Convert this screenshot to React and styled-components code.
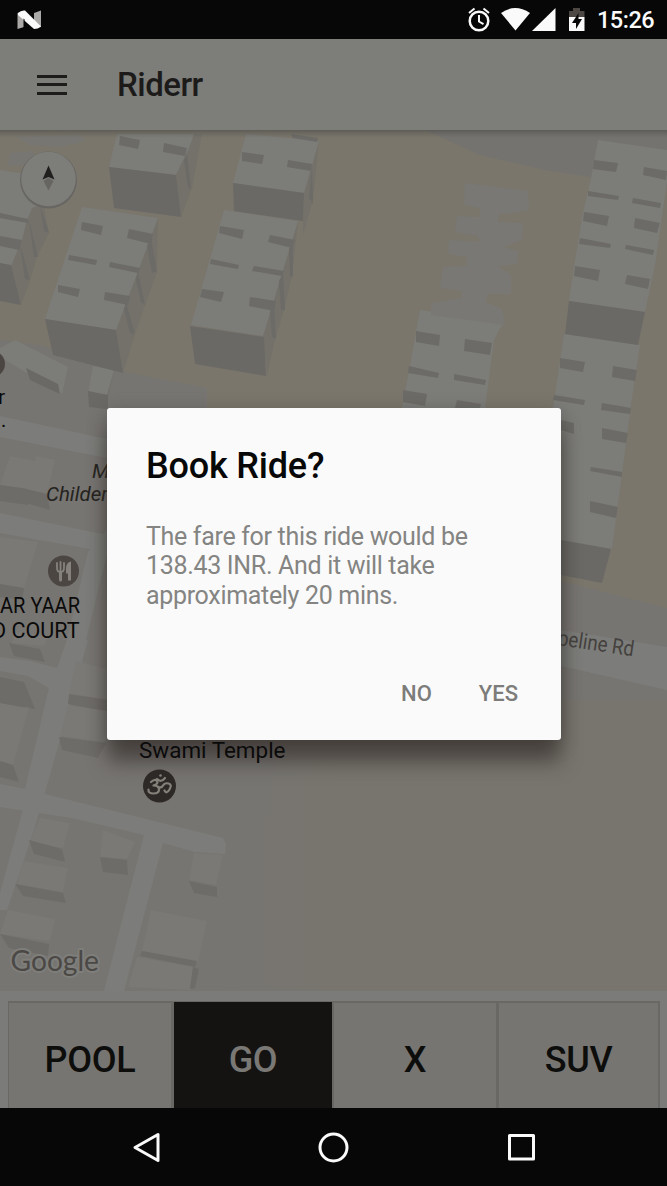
import React from 'react';
import styled, { createGlobalStyle } from 'styled-components';

const GlobalStyle = createGlobalStyle`
  *, *::before, *::after { box-sizing: border-box; }
  body { margin: 0; background: #070707; font-family: Roboto, "Liberation Sans", sans-serif; }
  button { font: inherit; border: 0; background: none; padding: 0; }
`;

const Screen = styled.main`
  position: relative;
  width: 667px;
  height: 1186px;
  overflow: hidden;
  display: flex;
  flex-direction: column;
  background: #070707;
`;

const StatusBar = styled.div`
  height: 39px;
  flex: none;
  display: flex;
  align-items: center;
  justify-content: space-between;
  padding: 0 13px 0 17px;
  color: #fafafa;
`;

const StatusIcons = styled.div`
  display: flex;
  align-items: center;
`;

const Clock = styled.span`
  margin-left: 11px;
  width: 57px;
  font-size: 23.5px;
  font-weight: 500;
  line-height: 39px;
  letter-spacing: -0.5px;
  white-space: nowrap;
  padding-top: 2px;
`;

const Toolbar = styled.header`
  height: 91px;
  flex: none;
  display: flex;
  align-items: center;
  gap: 50px;
  padding-left: 37px;
  background: #7d7d7a;
`;

const MenuButton = styled.button`
  width: 30px;
  height: 20px;
  display: flex;
  flex-direction: column;
  justify-content: space-between;
`;

const MenuLine = styled.span`
  display: block;
  height: 3px;
  width: 30px;
  background: #1d1c1b;
`;

const AppTitle = styled.h1`
  margin: 0;
  font-size: 33px;
  font-weight: 500;
  letter-spacing: -0.5px;
  line-height: 40px;
  color: #1c1b1a;
`;

const MapArea = styled.section`
  height: 861px;
  flex: none;
  background: #7a766b;

  svg { display: block; }
`;

const RideBar = styled.nav`
  height: 117px;
  flex: none;
  display: grid;
  grid-template-columns: 165px 160px 165px 162px;
  padding: 10px 8px 0;
  background: #7b7c79;
`;

const RideOption = styled.button`
  border: solid #696865;
  border-width: ${(p) => (p.$active ? '1px 1px 0 1px' : '2px 2px 0 1px')};
  background: ${(p) => (p.$active ? '#141312' : '#767572')};
  color: ${(p) => (p.$active ? '#797875' : '#0d0d0c')};
  font-size: 36px;
  font-weight: 500;
  letter-spacing: -0.3px;
  padding-top: ${(p) => (p.$active ? '9px' : '8px')};
`;

const NavBar = styled.footer`
  height: 78px;
  flex: none;
  display: flex;
  align-items: center;
  justify-content: center;
  background: #070707;

  svg { display: block; }
`;

const Scrim = styled.div`
  position: absolute;
  inset: 39px 0 78px;
  display: flex;
  align-items: center;
  justify-content: center;
`;

const Dialog = styled.section`
  width: 454px;
  height: 332px;
  margin: 1px 0 0 1px;
  display: flex;
  flex-direction: column;
  padding: 36px 33px 24px 39px;
  border-radius: 3px;
  background: #fafafa;
  box-shadow: 0 23px 20px -1px rgba(48, 42, 39, 0.6), 0 4px 18px rgba(55, 52, 46, 0.4);
`;

const DialogTitle = styled.h2`
  margin: 0;
  font-size: 36px;
  font-weight: 500;
  line-height: 44px;
  letter-spacing: -0.2px;
  color: #080808;
`;

const DialogText = styled.p`
  margin: 34px 0 0;
  width: 360px;
  font-size: 25px;
  line-height: 29.3px;
  letter-spacing: -0.32px;
  color: #848482;
`;

const Actions = styled.div`
  margin-top: auto;
  display: flex;
  justify-content: flex-end;
  gap: 29px;
`;

const Action = styled.button`
  height: 46px;
  padding: 0 10px 0 8px;
  font-size: 22px;
  font-weight: 500;
  letter-spacing: 0;
  color: #7c7c7a;
`;

const roofs = [
  '0,170 38,176 42,204 32,208 27,220 22,240 11,266 0,263',
  '117,134 194,134 189,148 176,175 109,167',
  '246,134 319,141 304,193 233,183',
  '82,207 158,218 116,330 45,319',
  '224,210 298,221 263,336 191,325',
  '598,140 667,150 667,182 655,265 645,312 569,301 574,267 583,213 591,178',
  '564,334 640,345 631,405 612,549 561,540 553,408',
  '420,310 470,317 505,322 499,330 494,340 485,408 402,408 411,360',
  '0,348 15,340 68,367 62,394 27,373 0,357',
  '93,366 114,370 107,395 88,393',
];

const faint = [
  '465,183 528,191 529,211 499,214 498,222 523,223 522,240 503,247 518,251 517,264 498,266 511,275 511,294 488,294 486,302 502,309 505,325 431,315 431,303 462,298 462,291 440,288 443,267 467,266 467,257 448,254 449,240 480,242 478,236 455,232 457,216 480,217 480,208 464,205',
];

const sides = [
  '176,175 194,134 202,134 192,188 181,217',
  '319,141 304,193 303,235 313,200',
  '158,218 157,272 145,305 135,334 123,373 116,330',
  '298,221 292,276 284,310 275,340 267,376 263,336',
  '38,176 49,233 37,257 30,281 21,304 11,266 22,240',
  '114,370 106,409 100,409 107,393',
];

const walls = [
  '109,167 176,175 181,217 114,208',
  '233,183 304,193 303,221 234,211',
  '45,319 116,330 123,373 53,355',
  '190,326 264,337 266,376 195,364',
  '0,263 11,265 21,305 0,301',
  '569,301 645,312 638,345 565,334',
  '561,540 611,549 602,583 561,575',
  '26,368 58,384 60,394 30,380',
  '88,391 108,395 108,409 89,407',
];

const notches = [
  '120,136 140,140 138,149 119,145', '164,143 187,148 185,156 163,152',
  '242,152 264,155 262,164 242,161', '288,160 312,164 311,171 287,167', '291,134 318,138 317,142 293,138',
  '82,222 103,226 101,235 81,230', '129,229 153,234 151,244 127,238',
  '69,255 97,260 96,265 68,260', '110,262 140,268 138,273 109,267',
  '58,285 80,289 78,297 58,292', '105,292 130,296 128,305 104,300',
  '220,226 244,230 242,239 219,233', '270,235 295,240 292,248 268,242',
  '211,259 239,265 238,269 210,264', '254,266 284,271 282,276 252,271',
  '202,289 224,292 221,302 200,297', '250,297 276,301 274,311 249,306',
  '0,213 28,219 28,223 0,218', '0,236 22,240 19,250 0,246',
  '40,205 49,233 44,231', '29,220 38,257 34,257', '20,244 30,280 25,279',
  '151,238 157,271 152,273 147,246', '138,272 145,305 141,302 136,280', '126,303 135,334 130,333 124,309',
  '293,246 293,277 290,276 289,248', '283,274 285,310 281,310 279,281', '274,306 276,339 272,337 270,312',
  '187,154 191,189 188,188 184,160', '312,168 313,204 309,198',
  '594,160 618,163 616,172 593,169', '644,167 667,171 666,180 643,175',
  '588,191 619,196 618,200 588,196', '633,198 661,203 660,208 632,203',
  '584,212 609,216 607,226 583,221', '635,218 660,223 657,233 634,228',
  '580,238 611,244 610,248 579,244', '626,245 654,250 653,255 625,249',
  '575,266 600,270 598,281 574,276', '627,275 650,279 648,289 625,284',
  '560,358 585,362 583,372 560,368', '613,366 637,370 635,381 612,377',
  '554,395 585,400 584,405 553,400', '602,403 631,408 630,414 601,410',
  '602,428 628,433 626,443 602,439', '591,467 622,472 622,477 590,471',
  '590,501 618,507 616,518 590,512', '561,420 574,423 574,434 561,430',
  '416,331 440,335 439,346 416,342', '465,339 492,343 490,355 464,351',
  '409,366 439,373 438,378 408,373', '454,374 486,380 485,385 454,380',
  '403,390 427,394 425,406 403,402', '457,400 481,404 480,408 455,408',
];

const roads = [
  '0,416 107,439 107,458 0,437',
  '0,513 107,535 107,552 0,533',
  '67,640 86,640 98,590 107,555 107,529 88,552',
  '67,640 88,640 44,796 34,830 7,910 0,910 0,893 24,806 0,800 0,784 25,789 49,688 28,676 0,671 0,657 30,661 57,668',
  '0,785 45,794 138,817 223,838 226,844 225,854 195,852 163,843 124,991 104,991 144,835 72,818 0,807',
  '561,630 667,647 667,690 561,666',
];

const blocks = [
  { roof: '10,456 36,461 28,489 0,485', wall: '0,485 28,489 28,505 0,501' },
  { roof: '36,456 55,460 47,494 26,489', wall: '26,489 47,494 50,510 26,503' },
  { roof: '0,537 38,542 24,588 0,584', wall: '0,584 24,588 22,600 0,597' },
  { roof: '14,632 49,636 44,646 12,643', wall: '9,643 40,649 45,662 14,656' },
  { roof: '0,703 28,709 13,762 0,760', wall: '0,677 24,682 35,709 0,703' },
  { roof: '0,712 29,707 13,765 0,761', wall: '0,761 13,765 19,782 0,777' },
  { roof: '76,661 107,669 107,699 69,694', wall: '69,694 107,700 107,712 68,704' },
  { roof: '68,705 107,711 107,742 60,736', wall: '59,737 106,743 98,758 62,750' },
  { roof: '40,818 70,823 63,848 30,842', wall: '29,840 62,849 65,862 34,854' },
  { roof: '23,861 68,868 63,892 17,884', wall: '15,884 63,893 66,903 23,896' },
  { roof: '8,910 55,919 50,941 0,934', wall: '0,934 49,944 48,956 9,948' },
  { roof: '103,830 135,842 127,859 100,857', wall: '100,857 127,860 128,875 103,872' },
  { roof: '194,853 223,855 216,885 189,880', wall: '189,881 217,887 217,897 194,893' },
  { roof: '151,910 207,921 198,962 142,951', wall: '142,951 197,961 195,967 140,956' },
  { roof: '137,957 193,967 190,990 128,987', wall: '193,967 199,969 195,988 190,989' },
];

const shade = {
  roof: '#7c7c79',
  wall: '#6a6966',
  side: '#73716a',
  ground: '#777572',
  road: '#7c7d7a',
};

function Shapes({ items, fill }) {
  return items.map((points, i) => <polygon key={i} points={points} fill={fill} />);
}

function RideMap() {
  return (
    <MapArea>
      <svg width="667" height="861" viewBox="0 130 667 861" fontFamily="Roboto, 'Liberation Sans', sans-serif">
        <defs>
          <linearGradient id="barShadow" x1="0" y1="0" x2="0" y2="1">
            <stop offset="0" stopColor="#4c4b48" stopOpacity="0.6" />
            <stop offset="1" stopColor="#5c5b57" stopOpacity="0" />
          </linearGradient>
          <linearGradient id="field" x1="0" y1="0" x2="1" y2="0">
            <stop offset="0" stopColor={shade.ground} />
            <stop offset="0.25" stopColor="#78756e" />
            <stop offset="1" stopColor="#78756e" />
          </linearGradient>
        </defs>
        <rect y="130" width="667" height="861" fill="#7a766b" />
        <polygon points="425,130 667,130 667,183 590,177 545,170 480,155" fill="#757370" />
        <polygon points="0,340 40,345 115,370 207,388 207,420 561,581 667,608 667,991 0,991" fill={shade.ground} />
        <polygon points="290,700 667,700 667,991 230,991 250,880" fill="url(#field)" />
        <polygon points="16,137 80,135 86,141 60,147 30,145" fill="#787673" />
        <polygon points="10,153 32,151 38,164 8,166" fill="#787673" />
        <Shapes items={roads} fill={shade.road} />
        {blocks.map((b, i) => (
          <g key={i}>
            <polygon points={b.roof} fill="#7a7976" />
            <polygon points={b.wall} fill="#6e6c69" />
          </g>
        ))}
        <Shapes items={sides} fill={shade.side} />
        <Shapes items={roofs} fill={shade.roof} />
        <Shapes items={faint} fill="#797874" />
        <Shapes items={walls} fill={shade.wall} />
        <Shapes items={notches} fill="#6c6b67" />
        <rect y="130" width="667" height="8" fill="url(#barShadow)" />

        <circle cx="48.5" cy="180" r="28.5" fill="#686662" />
        <circle cx="48.5" cy="179" r="27.3" fill="#7d7d7a" />
        <path d="M48.5 165.5 54.5 179.5 48.5 177 42.5 179.5Z" fill="#211f1d" />
        <path d="M43.5 181 48.5 178 53.5 181 48.5 190.5Z" fill="#676561" />

        <circle cx="-8" cy="364" r="13" fill="#4c4643" />
        <text x="-2" y="404" fontSize="21" fill="#090909">r</text>
        <text x="1" y="427" fontSize="20" fill="#090909">.</text>
        <g fontSize="20.5" fontStyle="italic" fill="#252320">
          <text x="92" y="478">M</text>
          <text x="46" y="501" textLength="62" lengthAdjust="spacingAndGlyphs">Childer</text>
        </g>
        <circle cx="63.5" cy="571" r="15.5" fill="#4c4643" />
        <g fill="none" stroke="#85827c" strokeLinecap="round">
          <path d="M57 563v5q0 4 3.500 4t3.500-4v-5M60.500 562v17" strokeWidth="1.800" />
          <path d="M60.500 572v8" strokeWidth="3" />
        </g>
        <path d="M71 561.500q-5 1-5 7v5h2v7h3Z" fill="#85827c" />
        <g fontSize="21.5" fill="#0b0a0a">
          <text x="0" y="613" textLength="80" lengthAdjust="spacingAndGlyphs">AR YAAR</text>
          <text x="-8" y="638" textLength="87.500" lengthAdjust="spacingAndGlyphs">D COURT</text>
        </g>
        <text transform="translate(541 642.5) rotate(8.500)" fontSize="21.500" fill="#45413e" textLength="93" lengthAdjust="spacingAndGlyphs">Pipeline Rd</text>

        <text x="10.500" y="971" fontFamily="Lato, sans-serif" fontSize="29" textLength="88.500" lengthAdjust="spacingAndGlyphs" stroke="#7e7e7b" strokeWidth="4" fill="#4b4845" paintOrder="stroke" strokeLinejoin="round">Google</text>
      </svg>
    </MapArea>
  );
}

const TempleLayer = styled.svg`
  position: absolute;
  left: 130px;
  top: 735px;
`;

function TempleLabel() {
  return (
    <TempleLayer width="170" height="74" viewBox="130 735 170 74">
      <text x="139" y="757.500" fontFamily="Roboto, sans-serif" fontSize="22.500" textLength="146.500" lengthAdjust="spacingAndGlyphs" fill="#0b0a0a">Swami Temple</text>
      <circle cx="159.500" cy="786" r="16.500" fill="#2c2927" />
      <g fill="none" stroke="#85817a" strokeWidth="2.200" strokeLinecap="round" strokeLinejoin="round">
        <path d="M151 782q4-3.500 6-1t-3.500 4.500q5.500 0 5.500 4t-5.500 4-5-4" />
        <path d="M158 787q3.500 1.500 5-1.500t5.500-2 1 6-5 1M157 779q4 4 8-1" />
      </g>
      <circle cx="160.500" cy="775.500" r="1.300" fill="#85817a" />
    </TempleLayer>
  );
}

function AndroidLogo() {
  return (
    <svg width="25" height="20" viewBox="0 0 25 20">
      <path d="M0.500 3 7 2v15L0.500 19ZM17 3 24 0.500v16.500l-7 1Z" fill="#aaa9a7" />
      <path d="M1 3Q4 0 8 0.500L24 16.500q-3 2.500-7 2.500L1 5Z" fill="#fafafa" />
      <path d="M7.500 9.500v8l-1 .5V8.500Z" fill="#070707" />
    </svg>
  );
}

function SystemIcons() {
  return (
    <svg width="119" height="26" viewBox="467 7 119 26">
      <g fill="none" stroke="#fafafa" strokeWidth="2.500">
        <circle cx="479" cy="21" r="9.300" />
        <path d="M479 15v6.500l4.500 2.700M469 13l5.500-4.500M489 13l-5.500-4.500" strokeWidth="2" />
      </g>
      <path d="M501 13q14-10 29 0L515.500 30.500Z" fill="#fafafa" />
      <path d="M532 31 555.500 8v23Z" fill="#fafafa" />
      <path d="M569 17v-6h4V8h7v3h4.500v6Z" fill="#4d4844" />
      <path d="M569 17h15.500v14H569Z" fill="#fafafa" />
      <path d="M578.500 13 572 23h4v6l6-10h-3.500Z" fill="#070707" />
    </svg>
  );
}

export default function App() {
  return (
    <>
      <GlobalStyle />
      <Screen>
        <StatusBar>
          <AndroidLogo />
          <StatusIcons>
            <SystemIcons />
            <Clock>15:26</Clock>
          </StatusIcons>
        </StatusBar>
        <Toolbar>
          <MenuButton aria-label="Menu">
            <MenuLine />
            <MenuLine />
            <MenuLine />
          </MenuButton>
          <AppTitle>Riderr</AppTitle>
        </Toolbar>
        <RideMap />
        <RideBar>
          <RideOption>POOL</RideOption>
          <RideOption $active>GO</RideOption>
          <RideOption>X</RideOption>
          <RideOption>SUV</RideOption>
        </RideBar>
        <NavBar>
          <svg width="667" height="78" viewBox="0 1108 667 78" fill="none" stroke="#fafafa" strokeWidth="3" strokeLinejoin="round">
            <path d="M135 1147.500 158 1134.500v26Z" />
            <circle cx="333.500" cy="1147.500" r="13.500" />
            <rect x="509.500" y="1135.500" width="24" height="23.500" />
          </svg>
        </NavBar>
        <Scrim>
          <Dialog role="dialog" aria-labelledby="dialog-title">
            <DialogTitle id="dialog-title">Book Ride?</DialogTitle>
            <DialogText>
              The fare for this ride would be 138.43 INR. And it will take approximately 20 mins.
            </DialogText>
            <Actions>
              <Action>NO</Action>
              <Action>YES</Action>
            </Actions>
          </Dialog>
        </Scrim>
        <TempleLabel />
      </Screen>
    </>
  );
}
